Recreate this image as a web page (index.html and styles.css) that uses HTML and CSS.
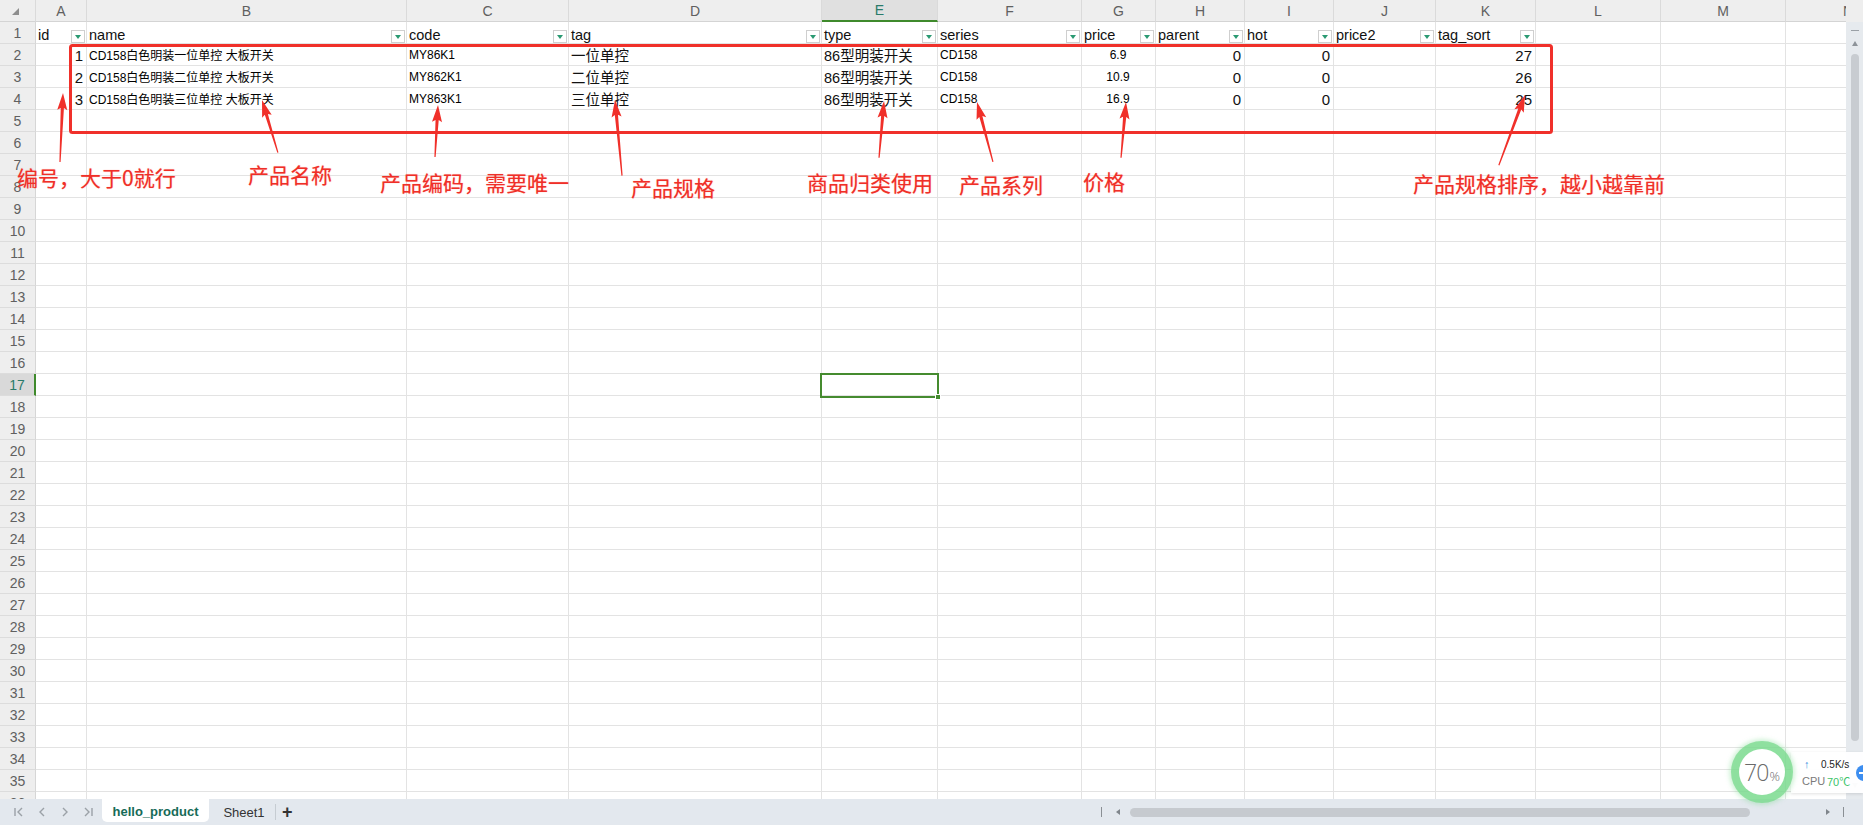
FILE: index.html
```html
<!DOCTYPE html>
<html lang="zh-CN">
<head>
<meta charset="utf-8">
<title>hello_product</title>
<link rel="stylesheet" href="styles.css">
</head>
<body>
<div class="app">
  <div class="main">
    <div class="sheet">
      <div class="row hdr">
        <div class="corner"><svg width="8" height="8" viewBox="0 0 8 8"><polygon points="7,0 7,7 0,7" fill="#8e8e8e"/></svg></div>
        <div>A</div><div>B</div><div>C</div><div>D</div><div class="sel">E</div><div>F</div><div>G</div><div>H</div><div>I</div><div>J</div><div>K</div><div>L</div><div>M</div><div>N</div>
      </div>
      <div class="row head1">
        <div class="rh">1</div>
        <div class="c">id<span class="fb"></span></div>
        <div class="c">name<span class="fb"></span></div>
        <div class="c">code<span class="fb"></span></div>
        <div class="c">tag<span class="fb"></span></div>
        <div class="c">type<span class="fb"></span></div>
        <div class="c">series<span class="fb"></span></div>
        <div class="c">price<span class="fb"></span></div>
        <div class="c">parent<span class="fb"></span></div>
        <div class="c">hot<span class="fb"></span></div>
        <div class="c">price2<span class="fb"></span></div>
        <div class="c">tag_sort<span class="fb"></span></div>
        <div class="c"></div><div class="c"></div><div class="c"></div>
      </div>
      <div class="row">
        <div class="rh">2</div>
        <div class="c num">1</div>
        <div class="c sm">CD158白色明装一位单控 大板开关</div>
        <div class="c sm">MY86K1</div>
        <div class="c lg">一位单控</div>
        <div class="c lg">86型明装开关</div>
        <div class="c sm">CD158</div>
        <div class="c sm mid">6.9</div>
        <div class="c num">0</div>
        <div class="c num">0</div>
        <div class="c"></div>
        <div class="c num">27</div>
        <div class="c"></div><div class="c"></div><div class="c"></div>
      </div>
      <div class="row">
        <div class="rh">3</div>
        <div class="c num">2</div>
        <div class="c sm">CD158白色明装二位单控 大板开关</div>
        <div class="c sm">MY862K1</div>
        <div class="c lg">二位单控</div>
        <div class="c lg">86型明装开关</div>
        <div class="c sm">CD158</div>
        <div class="c sm mid">10.9</div>
        <div class="c num">0</div>
        <div class="c num">0</div>
        <div class="c"></div>
        <div class="c num">26</div>
        <div class="c"></div><div class="c"></div><div class="c"></div>
      </div>
      <div class="row">
        <div class="rh">4</div>
        <div class="c num">3</div>
        <div class="c sm">CD158白色明装三位单控 大板开关</div>
        <div class="c sm">MY863K1</div>
        <div class="c lg">三位单控</div>
        <div class="c lg">86型明装开关</div>
        <div class="c sm">CD158</div>
        <div class="c sm mid">16.9</div>
        <div class="c num">0</div>
        <div class="c num">0</div>
        <div class="c"></div>
        <div class="c num">25</div>
        <div class="c"></div><div class="c"></div><div class="c"></div>
      </div>
      <div class="row"><div class="rh">5</div><div class="c"></div><div class="c"></div><div class="c"></div><div class="c"></div><div class="c"></div><div class="c"></div><div class="c"></div><div class="c"></div><div class="c"></div><div class="c"></div><div class="c"></div><div class="c"></div><div class="c"></div><div class="c"></div></div>
      <div class="row"><div class="rh">6</div><div class="c"></div><div class="c"></div><div class="c"></div><div class="c"></div><div class="c"></div><div class="c"></div><div class="c"></div><div class="c"></div><div class="c"></div><div class="c"></div><div class="c"></div><div class="c"></div><div class="c"></div><div class="c"></div></div>
      <div class="row"><div class="rh">7</div><div class="c"></div><div class="c"></div><div class="c"></div><div class="c"></div><div class="c"></div><div class="c"></div><div class="c"></div><div class="c"></div><div class="c"></div><div class="c"></div><div class="c"></div><div class="c"></div><div class="c"></div><div class="c"></div></div>
      <div class="row"><div class="rh">8</div><div class="c"></div><div class="c"></div><div class="c"></div><div class="c"></div><div class="c"></div><div class="c"></div><div class="c"></div><div class="c"></div><div class="c"></div><div class="c"></div><div class="c"></div><div class="c"></div><div class="c"></div><div class="c"></div></div>
      <div class="row"><div class="rh">9</div><div class="c"></div><div class="c"></div><div class="c"></div><div class="c"></div><div class="c"></div><div class="c"></div><div class="c"></div><div class="c"></div><div class="c"></div><div class="c"></div><div class="c"></div><div class="c"></div><div class="c"></div><div class="c"></div></div>
      <div class="row"><div class="rh">10</div><div class="c"></div><div class="c"></div><div class="c"></div><div class="c"></div><div class="c"></div><div class="c"></div><div class="c"></div><div class="c"></div><div class="c"></div><div class="c"></div><div class="c"></div><div class="c"></div><div class="c"></div><div class="c"></div></div>
      <div class="row"><div class="rh">11</div><div class="c"></div><div class="c"></div><div class="c"></div><div class="c"></div><div class="c"></div><div class="c"></div><div class="c"></div><div class="c"></div><div class="c"></div><div class="c"></div><div class="c"></div><div class="c"></div><div class="c"></div><div class="c"></div></div>
      <div class="row"><div class="rh">12</div><div class="c"></div><div class="c"></div><div class="c"></div><div class="c"></div><div class="c"></div><div class="c"></div><div class="c"></div><div class="c"></div><div class="c"></div><div class="c"></div><div class="c"></div><div class="c"></div><div class="c"></div><div class="c"></div></div>
      <div class="row"><div class="rh">13</div><div class="c"></div><div class="c"></div><div class="c"></div><div class="c"></div><div class="c"></div><div class="c"></div><div class="c"></div><div class="c"></div><div class="c"></div><div class="c"></div><div class="c"></div><div class="c"></div><div class="c"></div><div class="c"></div></div>
      <div class="row"><div class="rh">14</div><div class="c"></div><div class="c"></div><div class="c"></div><div class="c"></div><div class="c"></div><div class="c"></div><div class="c"></div><div class="c"></div><div class="c"></div><div class="c"></div><div class="c"></div><div class="c"></div><div class="c"></div><div class="c"></div></div>
      <div class="row"><div class="rh">15</div><div class="c"></div><div class="c"></div><div class="c"></div><div class="c"></div><div class="c"></div><div class="c"></div><div class="c"></div><div class="c"></div><div class="c"></div><div class="c"></div><div class="c"></div><div class="c"></div><div class="c"></div><div class="c"></div></div>
      <div class="row"><div class="rh">16</div><div class="c"></div><div class="c"></div><div class="c"></div><div class="c"></div><div class="c"></div><div class="c"></div><div class="c"></div><div class="c"></div><div class="c"></div><div class="c"></div><div class="c"></div><div class="c"></div><div class="c"></div><div class="c"></div></div>
      <div class="row"><div class="rh sel">17</div><div class="c"></div><div class="c"></div><div class="c"></div><div class="c"></div><div class="c"></div><div class="c"></div><div class="c"></div><div class="c"></div><div class="c"></div><div class="c"></div><div class="c"></div><div class="c"></div><div class="c"></div><div class="c"></div></div>
      <div class="row"><div class="rh">18</div><div class="c"></div><div class="c"></div><div class="c"></div><div class="c"></div><div class="c"></div><div class="c"></div><div class="c"></div><div class="c"></div><div class="c"></div><div class="c"></div><div class="c"></div><div class="c"></div><div class="c"></div><div class="c"></div></div>
      <div class="row"><div class="rh">19</div><div class="c"></div><div class="c"></div><div class="c"></div><div class="c"></div><div class="c"></div><div class="c"></div><div class="c"></div><div class="c"></div><div class="c"></div><div class="c"></div><div class="c"></div><div class="c"></div><div class="c"></div><div class="c"></div></div>
      <div class="row"><div class="rh">20</div><div class="c"></div><div class="c"></div><div class="c"></div><div class="c"></div><div class="c"></div><div class="c"></div><div class="c"></div><div class="c"></div><div class="c"></div><div class="c"></div><div class="c"></div><div class="c"></div><div class="c"></div><div class="c"></div></div>
      <div class="row"><div class="rh">21</div><div class="c"></div><div class="c"></div><div class="c"></div><div class="c"></div><div class="c"></div><div class="c"></div><div class="c"></div><div class="c"></div><div class="c"></div><div class="c"></div><div class="c"></div><div class="c"></div><div class="c"></div><div class="c"></div></div>
      <div class="row"><div class="rh">22</div><div class="c"></div><div class="c"></div><div class="c"></div><div class="c"></div><div class="c"></div><div class="c"></div><div class="c"></div><div class="c"></div><div class="c"></div><div class="c"></div><div class="c"></div><div class="c"></div><div class="c"></div><div class="c"></div></div>
      <div class="row"><div class="rh">23</div><div class="c"></div><div class="c"></div><div class="c"></div><div class="c"></div><div class="c"></div><div class="c"></div><div class="c"></div><div class="c"></div><div class="c"></div><div class="c"></div><div class="c"></div><div class="c"></div><div class="c"></div><div class="c"></div></div>
      <div class="row"><div class="rh">24</div><div class="c"></div><div class="c"></div><div class="c"></div><div class="c"></div><div class="c"></div><div class="c"></div><div class="c"></div><div class="c"></div><div class="c"></div><div class="c"></div><div class="c"></div><div class="c"></div><div class="c"></div><div class="c"></div></div>
      <div class="row"><div class="rh">25</div><div class="c"></div><div class="c"></div><div class="c"></div><div class="c"></div><div class="c"></div><div class="c"></div><div class="c"></div><div class="c"></div><div class="c"></div><div class="c"></div><div class="c"></div><div class="c"></div><div class="c"></div><div class="c"></div></div>
      <div class="row"><div class="rh">26</div><div class="c"></div><div class="c"></div><div class="c"></div><div class="c"></div><div class="c"></div><div class="c"></div><div class="c"></div><div class="c"></div><div class="c"></div><div class="c"></div><div class="c"></div><div class="c"></div><div class="c"></div><div class="c"></div></div>
      <div class="row"><div class="rh">27</div><div class="c"></div><div class="c"></div><div class="c"></div><div class="c"></div><div class="c"></div><div class="c"></div><div class="c"></div><div class="c"></div><div class="c"></div><div class="c"></div><div class="c"></div><div class="c"></div><div class="c"></div><div class="c"></div></div>
      <div class="row"><div class="rh">28</div><div class="c"></div><div class="c"></div><div class="c"></div><div class="c"></div><div class="c"></div><div class="c"></div><div class="c"></div><div class="c"></div><div class="c"></div><div class="c"></div><div class="c"></div><div class="c"></div><div class="c"></div><div class="c"></div></div>
      <div class="row"><div class="rh">29</div><div class="c"></div><div class="c"></div><div class="c"></div><div class="c"></div><div class="c"></div><div class="c"></div><div class="c"></div><div class="c"></div><div class="c"></div><div class="c"></div><div class="c"></div><div class="c"></div><div class="c"></div><div class="c"></div></div>
      <div class="row"><div class="rh">30</div><div class="c"></div><div class="c"></div><div class="c"></div><div class="c"></div><div class="c"></div><div class="c"></div><div class="c"></div><div class="c"></div><div class="c"></div><div class="c"></div><div class="c"></div><div class="c"></div><div class="c"></div><div class="c"></div></div>
      <div class="row"><div class="rh">31</div><div class="c"></div><div class="c"></div><div class="c"></div><div class="c"></div><div class="c"></div><div class="c"></div><div class="c"></div><div class="c"></div><div class="c"></div><div class="c"></div><div class="c"></div><div class="c"></div><div class="c"></div><div class="c"></div></div>
      <div class="row"><div class="rh">32</div><div class="c"></div><div class="c"></div><div class="c"></div><div class="c"></div><div class="c"></div><div class="c"></div><div class="c"></div><div class="c"></div><div class="c"></div><div class="c"></div><div class="c"></div><div class="c"></div><div class="c"></div><div class="c"></div></div>
      <div class="row"><div class="rh">33</div><div class="c"></div><div class="c"></div><div class="c"></div><div class="c"></div><div class="c"></div><div class="c"></div><div class="c"></div><div class="c"></div><div class="c"></div><div class="c"></div><div class="c"></div><div class="c"></div><div class="c"></div><div class="c"></div></div>
      <div class="row"><div class="rh">34</div><div class="c"></div><div class="c"></div><div class="c"></div><div class="c"></div><div class="c"></div><div class="c"></div><div class="c"></div><div class="c"></div><div class="c"></div><div class="c"></div><div class="c"></div><div class="c"></div><div class="c"></div><div class="c"></div></div>
      <div class="row"><div class="rh">35</div><div class="c"></div><div class="c"></div><div class="c"></div><div class="c"></div><div class="c"></div><div class="c"></div><div class="c"></div><div class="c"></div><div class="c"></div><div class="c"></div><div class="c"></div><div class="c"></div><div class="c"></div><div class="c"></div></div>
      <div class="row"><div class="rh">36</div><div class="c"></div><div class="c"></div><div class="c"></div><div class="c"></div><div class="c"></div><div class="c"></div><div class="c"></div><div class="c"></div><div class="c"></div><div class="c"></div><div class="c"></div><div class="c"></div><div class="c"></div><div class="c"></div></div>

      <div class="selbox"><span class="handle"></span></div>

      <svg class="marks" width="1846" height="799" viewBox="0 0 1846 799">
        <rect x="70.5" y="45.5" width="1481" height="87" rx="2" fill="none" stroke="#f0302a" stroke-width="3"/>
        <g fill="#f0302a">
          <g transform="translate(63 93) rotate(2.5)"><polygon points="0,0 5,17 1.6,15 0.6,69 -0.6,69 -1.6,15 -5,17"/></g>
          <g transform="translate(262 100) rotate(-16.8)"><polygon points="0,0 5,17 1.6,15 0.6,55 -0.6,55 -1.6,15 -5,17"/></g>
          <g transform="translate(438 105) rotate(3.3)"><polygon points="0,0 5,17 1.6,15 0.6,52 -0.6,52 -1.6,15 -5,17"/></g>
          <g transform="translate(615 100) rotate(-5.3)"><polygon points="0,0 5,17 1.6,15 0.6,76 -0.6,76 -1.6,15 -5,17"/></g>
          <g transform="translate(884 101) rotate(5)"><polygon points="0,0 5,17 1.6,15 0.6,57 -0.6,57 -1.6,15 -5,17"/></g>
          <g transform="translate(977 102) rotate(-14.9)"><polygon points="0,0 5,17 1.6,15 0.6,62 -0.6,62 -1.6,15 -5,17"/></g>
          <g transform="translate(1126 102) rotate(5.1)"><polygon points="0,0 5,17 1.6,15 0.6,56 -0.6,56 -1.6,15 -5,17"/></g>
          <g transform="translate(1525 95) rotate(20.4)"><polygon points="0,0 5,17 1.6,15 0.6,75 -0.6,75 -1.6,15 -5,17"/></g>
        </g>
      </svg>

      <span class="note n1">编号，大于0就行</span>
      <span class="note n2">产品名称</span>
      <span class="note n3">产品编码，需要唯一</span>
      <span class="note n4">产品规格</span>
      <span class="note n5">商品归类使用</span>
      <span class="note n6">产品系列</span>
      <span class="note n7">价格</span>
      <span class="note n8">产品规格排序，越小越靠前</span>
    </div>
    <div class="vscroll">
      <span class="vs-line"></span>
      <span class="vs-up"></span>
      <span class="vs-thumb"></span>
      <span class="vs-down"></span>
    </div>
  </div>

  <div class="bar">
    <div class="nav">
      <svg width="12" height="12" viewBox="0 0 12 12"><path d="M2 2v8M9 2L5 6l4 4" fill="none" stroke="#9ba1a7" stroke-width="1.4"/></svg>
      <svg width="12" height="12" viewBox="0 0 12 12"><path d="M8 2L4 6l4 4" fill="none" stroke="#9ba1a7" stroke-width="1.4"/></svg>
      <svg width="12" height="12" viewBox="0 0 12 12"><path d="M4 2l4 4-4 4" fill="none" stroke="#9ba1a7" stroke-width="1.4"/></svg>
      <svg width="12" height="12" viewBox="0 0 12 12"><path d="M3 2l4 4-4 4M10 2v8" fill="none" stroke="#9ba1a7" stroke-width="1.4"/></svg>
    </div>
    <div class="tab active">hello_product</div>
    <div class="tab">Sheet1</div>
    <span class="tsep"></span>
    <span class="plus">+</span>
    <div class="hscroll">
      <span class="hs-bar"></span>
      <span class="hs-left"></span>
      <span class="hs-thumb"></span>
      <span class="hs-right"></span>
      <span class="hs-bar2"></span>
    </div>
  </div>

  <div class="monitor">
    <div class="ring"><span class="pct">70<small>%</small></span></div>
    <div class="mpanel">
      <div class="mrow"><span class="up">↑</span><span class="speed">0.5K/s</span></div>
      <div class="mrow"><span class="cpu">CPU</span><span class="temp">70℃</span></div>
    </div>
    <span class="mbtn"></span>
  </div>
</div>
</body>
</html>
```

FILE: styles.css
```css
* { box-sizing: border-box; margin: 0; padding: 0; }
html, body { width: 1863px; height: 825px; overflow: hidden; background: #fff; }
body { font-family: "Liberation Sans", "Noto Sans CJK SC", sans-serif; color: #000; }

.app { position: relative; width: 1863px; height: 825px; display: flex; flex-direction: column; }

.main { height: 799px; display: flex; background: #eeeeee; }
.sheet { position: relative; width: 1846px; height: 799px; overflow: hidden; background: #fff; }

.row {
  display: grid;
  grid-template-columns: 36px 51px 320px 162px 253px 116px 144px 74px 89px 89px 102px 100px 125px 125px 125px;
  height: 22px;
}
.row > div {
  position: relative;
  display: flex;
  align-items: center;
  white-space: nowrap;
  overflow: hidden;
  border-right: 1px solid #e3e3e3;
  border-bottom: 1px solid #e3e3e3;
}

.hdr > div {
  background: #eeeeee;
  border-right-color: #dadada;
  border-bottom-color: #d4d4d4;
  justify-content: center;
  color: #606060;
  font-size: 14px;
}
.hdr > div.sel {
  background: #e0e0e0;
  color: #2a7b6a;
  border-bottom: 2px solid #3f8a2c;
}
.hdr .corner { justify-content: flex-start; align-items: flex-start; padding: 8px 0 0 12px; }

.rh {
  background: #eeeeee;
  border-right-color: #d6d6d6 !important;
  border-bottom-color: #dcdcdc !important;
  justify-content: center;
  color: #606060;
  font-size: 14px;
}
.rh.sel {
  background: #d9d9d9;
  color: #2a7b6a;
  border-right: 2px solid #3f8a2c !important;
}

.c { padding: 0 3px 0 2px; font-size: 15px; color: #111; }
.head1 .c { font-size: 14.5px; color: #111; padding-top: 4px; }
.sm { font-size: 12px; color: #000; }
.lg { font-size: 14.5px; }
.num { justify-content: flex-end; font-size: 15px; padding-top: 2px; }
.mid { justify-content: center; }

.fb {
  position: absolute;
  right: 1px;
  bottom: 0;
  width: 14px;
  height: 13px;
  background: #fff;
  border: 1px solid #cfcfcf;
}
.fb::after {
  content: "";
  position: absolute;
  left: 3px;
  top: 4px;
  border-left: 3.5px solid transparent;
  border-right: 3.5px solid transparent;
  border-top: 4px solid #2a9a72;
}

.selbox {
  position: absolute;
  left: 820px;
  top: 373px;
  width: 119px;
  height: 25px;
  border: 2px solid #458b2f;
}
.handle {
  position: absolute;
  right: -4px;
  bottom: -4px;
  width: 6px;
  height: 6px;
  background: #458b2f;
  border: 1px solid #fff;
}

.marks { position: absolute; left: 0; top: 0; pointer-events: none; }

.note {
  position: absolute;
  font-family: "Noto Sans CJK SC", sans-serif;
  font-size: 21px;
  line-height: 1;
  color: #ef2f28;
  white-space: nowrap;
  text-shadow: 0 0 1px rgba(255, 90, 80, 0.6);
}
.n1 { left: 17px; top: 167px; }
.n2 { left: 248px; top: 164px; }
.n3 { left: 380px; top: 172px; }
.n4 { left: 631px; top: 177px; }
.n5 { left: 807px; top: 172px; }
.n6 { left: 959px; top: 174px; }
.n7 { left: 1083px; top: 171px; }
.n8 { left: 1413px; top: 173px; }

.vscroll {
  width: 17px;
  margin-top: 22px;
  background: #e6eaee;
  display: flex;
  flex-direction: column;
  align-items: center;
  position: relative;
}
.vs-line { width: 8px; height: 1px; background: #9aa0a6; margin-top: 8px; }
.vs-up {
  margin-top: 10px;
  border-left: 3px solid transparent;
  border-right: 3px solid transparent;
  border-bottom: 5px solid #8d9399;
}
.vs-thumb { width: 8px; height: 687px; margin-top: 8px; border-radius: 4px; background: #c8ccd1; }
.vs-down {
  margin-top: 42px;
  border-left: 3px solid transparent;
  border-right: 3px solid transparent;
  border-top: 5px solid #b0b5ba;
}

.bar {
  height: 26px;
  background: #e3e8ee;
  display: flex;
  align-items: center;
}
.nav { width: 102px; display: flex; align-items: center; gap: 11px; padding-left: 13px; }
.tab {
  height: 26px;
  display: flex;
  align-items: center;
  justify-content: center;
  font-size: 13px;
  color: #333;
}
.tab.active {
  align-self: flex-start;
  width: 107px;
  height: 23px;
  background: #fff;
  border-radius: 0 0 5px 5px;
  font-weight: bold;
  color: #166b58;
  padding-top: 2px;
}
.tab:not(.active) { width: 66px; padding-left: 4px; }
.tsep { width: 1px; height: 16px; background: #c6ccd2; }
.plus { margin-left: 6px; font-size: 18px; font-weight: bold; color: #333; line-height: 1; }

.hscroll {
  margin-left: auto;
  width: 768px;
  display: flex;
  align-items: center;
}
.hs-bar { margin-left: 6px; width: 1px; height: 10px; background: #8a8f94; }
.hs-left {
  margin-left: 14px;
  border-top: 3.5px solid transparent;
  border-bottom: 3.5px solid transparent;
  border-right: 4px solid #7f858b;
}
.hs-thumb { margin-left: 10px; width: 620px; height: 9px; border-radius: 5px; background: #c6cacf; }
.hs-right {
  margin-left: 76px;
  border-top: 3.5px solid transparent;
  border-bottom: 3.5px solid transparent;
  border-left: 4px solid #7f858b;
}
.hs-bar2 { margin-left: 13px; width: 1px; height: 10px; background: #8a8f94; }

.monitor { position: absolute; left: 1733px; top: 740px; width: 130px; height: 66px; }
.ring {
  position: absolute;
  left: 6px;
  top: 9px;
  width: 46px;
  height: 46px;
  border-radius: 50%;
  background: #fff;
  box-shadow: 0 0 0 8px rgba(120, 218, 140, 0.75), 0 0 4px 10px rgba(120, 218, 140, 0.35);
  display: flex;
  align-items: center;
  justify-content: center;
  z-index: 2;
}
.pct { font-family: "Open Sans", "Liberation Sans", sans-serif; font-weight: 300; font-size: 23px; color: #6a6a6a; letter-spacing: -1px; }
.pct small { font-size: 13px; letter-spacing: 0; margin-left: 1px; }
.mpanel {
  position: absolute;
  left: 58px;
  top: 12px;
  width: 72px;
  height: 41px;
  background: rgba(255, 255, 255, 0.95);
  box-shadow: 0 1px 3px rgba(0, 0, 0, 0.12);
  display: flex;
  flex-direction: column;
  justify-content: center;
  gap: 5px;
  padding-left: 11px;
}
.mrow { display: flex; align-items: center; height: 12px; }
.up { color: #3b8fe0; font-size: 11px; width: 19px; padding-left: 2px; }
.speed { font-size: 10px; color: #222; }
.cpu { font-size: 11px; color: #7a7a7a; width: 25px; }
.temp { font-size: 11px; color: #3cc46a; }
.mbtn {
  position: absolute;
  left: 123px;
  top: 25px;
  width: 16px;
  height: 16px;
  border-radius: 50%;
  background: #3d8ef0;
}
.mbtn::after {
  content: "";
  position: absolute;
  left: 3px;
  top: 7px;
  width: 4px;
  height: 2px;
  background: #fff;
}
```
